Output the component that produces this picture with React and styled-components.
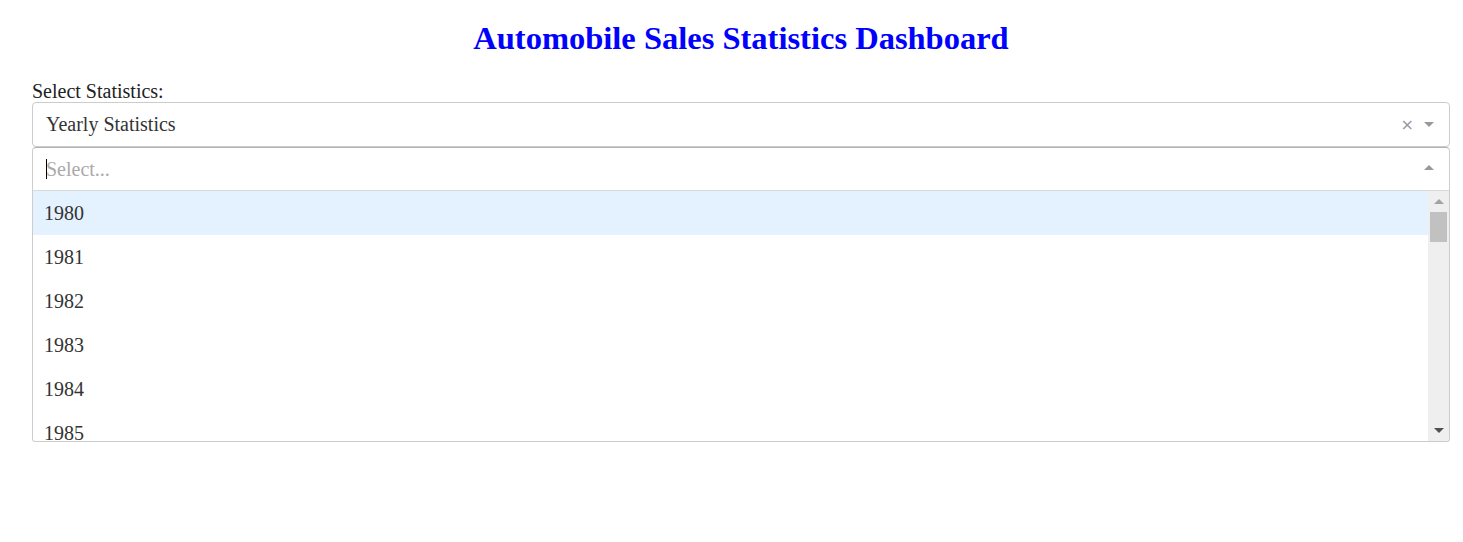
import React from 'react';
import styled, { createGlobalStyle } from 'styled-components';

const GlobalStyle = createGlobalStyle`
  html, body {
    margin: 0;
    padding: 0;
    background: #fff;
    font-family: "Liberation Serif", "Times New Roman", serif;
  }
`;

const Page = styled.div`
  padding: 0 13px 0 32px;
`;

const Title = styled.h1`
  margin: 0;
  padding-top: 18px;
  height: 62px;
  box-sizing: border-box;
  text-align: center;
  color: #0000ff;
  font-size: 32.5px;
  font-weight: bold;
  line-height: 40px;
`;

const Label = styled.label`
  display: block;
  font-size: 20px;
  line-height: 22px;
  height: 22px;
  color: #222;
  margin-top: 18px;
`;

const Control = styled.div`
  display: flex;
  align-items: center;
  height: ${p => p.$height}px;
  box-sizing: border-box;
  border: 1px solid #ccc;
  border-color: ${p => (p.$open ? '#b3b3b3 #ccc #d9d9d9' : '#ccc')};
  border-radius: ${p => (p.$open ? '4px 4px 0 0' : '4px')};
  background: #fff;
  padding: 0 15px 0 13px;
  font-size: 20px;
  color: #333;
`;

const Value = styled.div`
  flex: 1;
  position: relative;
  color: ${p => (p.$placeholder ? '#aaa' : '#333')};
`;

const Caret = styled.span`
  position: absolute;
  left: 0;
  top: 50%;
  width: 1px;
  height: 20px;
  margin-top: -10px;
  background: #000;
`;

const Clear = styled.span`
  color: #999;
  font-family: "DejaVu Sans", sans-serif;
  font-size: 16px;
  line-height: 1;
  margin-right: 10px;
`;

const Arrow = styled.span`
  width: 0;
  height: 0;
  border-style: solid;
  border-color: ${p => (p.$up ? 'transparent transparent #999' : '#999 transparent transparent')};
  border-width: ${p => (p.$up ? '0 5px 5px' : '5px 5px 2.5px')};
  margin-top: ${p => (p.$up ? '-3px' : '2px')};
`;

const Menu = styled.div`
  display: flex;
  height: 251px;
  box-sizing: border-box;
  border: 1px solid #ccc;
  border-top: none;
  border-radius: 0 0 4px 4px;
  box-shadow: 0 1px 0 rgba(0, 0, 0, 0.06);
  overflow: hidden;
  background: #fff;
`;

const OptionList = styled.div`
  flex: 1;
  overflow: hidden;
`;

const Option = styled.div`
  height: 44px;
  display: flex;
  align-items: center;
  padding-left: 11px;
  font-size: 20px;
  color: #333;
  background: ${p => (p.$focused ? '#e4f1fe' : '#fff')};
`;

const ScrollTrack = styled.div`
  width: 21px;
  display: flex;
  flex-direction: column;
  align-items: center;
  background: #efefef;
`;

const ScrollButton = styled.div`
  height: 21px;
  width: 100%;
  display: flex;
  align-items: center;
  justify-content: center;
  &::after {
    content: '';
    border-style: solid;
    border-color: ${p => (p.$down ? '#505050 transparent transparent' : 'transparent transparent #a3a3a3')};
    border-width: ${p => (p.$down ? '5px 5px 0' : '0 5px 5px')};
  }
`;

const Thumb = styled.div`
  width: 17px;
  height: 30px;
  background: #c1c1c1;
`;

const Spacer = styled.div`
  flex: 1;
`;

const years = [1980, 1981, 1982, 1983, 1984, 1985];

export default function App() {
  return (
    <Page>
      <GlobalStyle />
      <Title>Automobile Sales Statistics Dashboard</Title>
      <Label>Select Statistics:</Label>
      <Control $height={45}>
        <Value>Yearly Statistics</Value>
        <Clear>×</Clear>
        <Arrow />
      </Control>
      <Control $height={44} $open>
        <Value $placeholder>
          <Caret />
          Select...
        </Value>
        <Arrow $up />
      </Control>
      <Menu>
        <OptionList>
          {years.map((y, i) => (
            <Option key={y} $focused={i === 0}>{y}</Option>
          ))}
        </OptionList>
        <ScrollTrack>
          <ScrollButton />
          <Thumb />
          <Spacer />
          <ScrollButton $down />
        </ScrollTrack>
      </Menu>
    </Page>
  );
}
